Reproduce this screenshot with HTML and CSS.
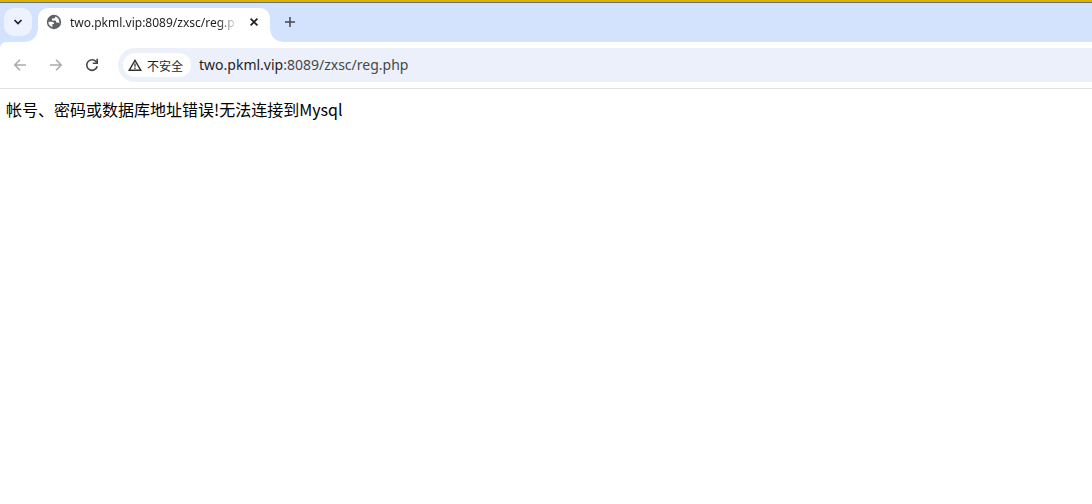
FILE: index.html
```html
<!DOCTYPE html>
<html lang="zh-CN">
<head>
    <meta charset="UTF-8">
    <meta name="viewport" content="width=device-width, initial-scale=1.0">
    <title>two.pkml.vip:8089/zxsc/reg.php</title>
    <link rel="stylesheet" href="styles.css">
</head>
<body>
    <header class="browser">
        <div class="tab-strip">
            <button class="tab-search" type="button" aria-label="搜索标签页">
                <svg width="10" height="6" viewBox="0 0 10 6"><path d="M1.5 1L5 4.5 8.5 1" fill="none" stroke="#1f1f1f" stroke-width="1.7"/></svg>
            </button>
            <div class="tab">
                <svg class="globe" width="16" height="16" viewBox="0 0 16 16">
                    <circle cx="8" cy="8" r="7.2" fill="#5f6368"/>
                    <path d="M2.4 7.8h3.4c1.6 0 2.3.9 2.3 2.3h-1.7v2.9C4 12.6 2.3 10.5 2.4 7.8z" fill="#fff"/>
                    <path d="M9.3 2.5c0 1.5-.7 2.1-2.1 2.1H6v1.9h2.9c.8 0 1.2.4 1.2 1.2v.8h1.3c1 0 1.6.5 1.8 1.2.7-3-.8-6.2-3.9-7.2z" fill="#fff"/>
                </svg>
                <span class="tab-title">two.pkml.vip:8089/zxsc/reg.p</span>
                <button class="tab-close" type="button" aria-label="关闭">
                    <svg width="8" height="8" viewBox="0 0 8 8"><path d="M.6.6l6.8 6.8M7.4.6L.6 7.4" stroke="#1f1f1f" stroke-width="1.7"/></svg>
                </button>
            </div>
            <button class="new-tab" type="button" aria-label="打开新的标签页">
                <svg width="10" height="10" viewBox="0 0 10 10"><path d="M5 0v10M0 5h10" stroke="#474747" stroke-width="1.5"/></svg>
            </button>
        </div>
        <div class="toolbar">
            <button class="nav" type="button" aria-label="后退" disabled>
                <svg width="14" height="14" viewBox="0 0 14 14"><path d="M13 7H2.5M7 1.8L1.8 7 7 12.2" fill="none" stroke="#ababab" stroke-width="1.6"/></svg>
            </button>
            <button class="nav" type="button" aria-label="前进" disabled>
                <svg width="14" height="14" viewBox="0 0 14 14"><path d="M1 7h10.5M7 1.8L12.2 7 7 12.2" fill="none" stroke="#ababab" stroke-width="1.6"/></svg>
            </button>
            <button class="nav" type="button" aria-label="重新加载">
                <svg width="14" height="14" viewBox="0 0 14 14"><path d="M12.2 8.3A5.3 5.3 0 1 1 11 3.5L12.2 5" fill="none" stroke="#474747" stroke-width="1.6"/><path d="M13 .8v5.2H7.8V4.4h3.6V.8z" fill="#474747"/></svg>
            </button>
            <div class="omnibox">
                <button class="security" type="button">
                    <svg width="14" height="12" viewBox="0 0 14 12"><path d="M7 1.3L12.8 11.3H1.2z" fill="none" stroke="#333" stroke-width="1.4"/><path d="M7 4.6v3.2M7 8.5v1.4" stroke="#333" stroke-width="1.3"/></svg>
                    不安全
                </button>
                <a class="url" href="#"><span class="host">two.pkml.vip</span>:8089/zxsc/reg.php</a>
            </div>
        </div>
    </header>
    <main class="content">帐号、密码或数据库地址错误!无法连接到Mysql</main>
</body>
</html>
```

FILE: styles.css
```css
body {
    margin: 0;
    background-color: #fff;
    color: #000;
    font-family: "Noto Sans CJK SC", sans-serif;
}
button {
    display: flex;
    align-items: center;
    justify-content: center;
    padding: 0;
    border: 0;
    background: none;
    color: #1f1f1f;
    font-family: inherit;
}
svg {
    flex: none;
}
.browser {
    border-top: 2px solid #dcb400;
    border-bottom: 1px solid #dfdfdf;
    background-color: #d3e3fd;
}
.tab-strip {
    display: flex;
    align-items: flex-start;
    height: 34px;
    padding: 5px 4px 0;
    border-top: 1px solid #6a6f78;
}
.tab-search {
    width: 28px;
    height: 28px;
    margin-right: 6px;
    border-radius: 10px;
    background-color: #ecf2fe;
}
.tab {
    position: relative;
    display: flex;
    align-items: center;
    box-sizing: border-box;
    width: 232px;
    height: 34px;
    padding: 0 10px 6px 8px;
    border-radius: 10px 10px 0 0;
    background-color: #fff;
}
/* curved feet of the active tab */
.tab::before,
.tab::after {
    content: "";
    position: absolute;
    bottom: 0;
    width: 12px;
    height: 12px;
}
.tab::before {
    left: -12px;
    background: radial-gradient(circle at 0 0, transparent 11px, #fff 12px);
}
.tab::after {
    right: -12px;
    background: radial-gradient(circle at 100% 0, transparent 11px, #fff 12px);
}
.tab-title {
    flex: 1;
    min-width: 0;
    margin-left: 8px;
    padding-top: 2px;
    color: #1f1f1f;
    font-family: "Noto Sans", sans-serif;
    font-size: 12px;
    line-height: 16px;
    white-space: nowrap;
    -webkit-mask-image: linear-gradient(to left, transparent, #000 20px);
    mask-image: linear-gradient(to left, transparent, #000 20px);
}
.tab-close {
    width: 12px;
    height: 16px;
    margin-left: 10px;
}
.new-tab {
    width: 28px;
    height: 28px;
    margin-left: 6px;
}
.toolbar {
    display: flex;
    align-items: center;
    height: 46px;
    padding-left: 2px;
    border-top-left-radius: 6px;
    background-color: #fff;
}
.nav {
    width: 36px;
    height: 36px;
}
.omnibox {
    display: flex;
    flex: 1;
    align-items: center;
    height: 34px;
    margin-left: 8px;
    padding-left: 5px;
    border-radius: 17px 0 0 17px;
    background-color: #ecf0fa;
}
.security {
    gap: 5px;
    height: 24px;
    padding: 0 8px 0 5px;
    border-radius: 12px;
    background-color: #fff;
    font-size: 12px;
}
.url {
    margin-left: 8px;
    color: #474747;
    font-family: "Noto Sans", sans-serif;
    font-size: 14px;
    line-height: 20px;
    text-decoration: none;
}
.host {
    color: #1f1f1f;
}
.content {
    padding: 8px 6px;
    font-size: 16px;
    line-height: 24px;
}
```
